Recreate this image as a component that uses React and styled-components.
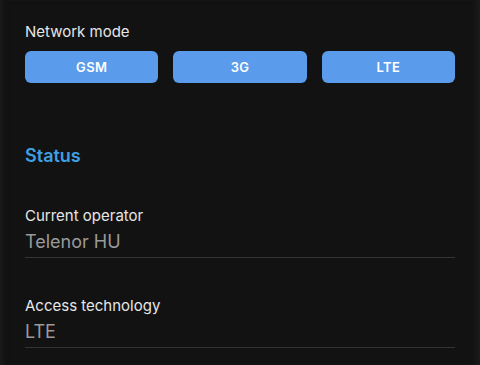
import styled, { createGlobalStyle } from "styled-components";

const GlobalStyle = createGlobalStyle`
  html, body {
    margin: 0;
    padding: 0;
    background: #121212;
  }
  body {
    font-family: Inter, "Noto Sans", "Liberation Sans", sans-serif;
    -webkit-font-smoothing: antialiased;
  }
`;

const Screen = styled.div`
  width: 480px;
  height: 365px;
  overflow: hidden;
  background: #121212;
  box-shadow: inset 6px 0 6px -4px #1e1e1e, inset -8px 0 6px -4px #1c1c1c;
`;

const Content = styled.div`
  padding: 22px 25px 0 25px;
  display: flex;
  flex-direction: column;
`;

const Label = styled.div`
  font-size: 15px;
  color: #e6e6e6;
  line-height: 20px;
`;

const ModeRow = styled.div`
  display: grid;
  grid-template-columns: repeat(3, 1fr);
  gap: 15px;
  margin-top: 9px;
`;

const ModeButton = styled.button`
  height: 32px;
  border: none;
  border-radius: 6px;
  background: #5a9beb;
  color: #fff;
  font-family: inherit;
  font-size: 13px;
  font-weight: 600;
  letter-spacing: 0.3px;
  cursor: pointer;
`;

const SectionTitle = styled.h2`
  margin: 61px 0 0;
  font-size: 18px;
  font-weight: 600;
  color: #3f9fe2;
  line-height: 24px;
`;

const Field = styled.div`
  margin-top: ${(p) => p.$gap}px;
  display: flex;
  flex-direction: column;
  gap: 4px;
  padding-bottom: 3px;
  border-bottom: 1px solid #343434;
`;

const Value = styled.div`
  font-size: 18px;
  line-height: 24px;
  color: #9a9a9a;
`;

const fields = [
  { label: "Current operator", value: "Telenor HU", gap: 38 },
  { label: "Access technology", value: "LTE", gap: 38 },
];

export default function App() {
  return (
    <Screen>
      <GlobalStyle />
      <Content>
        <Label>Network mode</Label>
        <ModeRow>
          <ModeButton>GSM</ModeButton>
          <ModeButton>3G</ModeButton>
          <ModeButton>LTE</ModeButton>
        </ModeRow>
        <SectionTitle>Status</SectionTitle>
        {fields.map((f) => (
          <Field key={f.label} $gap={f.gap}>
            <Label>{f.label}</Label>
            <Value>{f.value}</Value>
          </Field>
        ))}
      </Content>
    </Screen>
  );
}
